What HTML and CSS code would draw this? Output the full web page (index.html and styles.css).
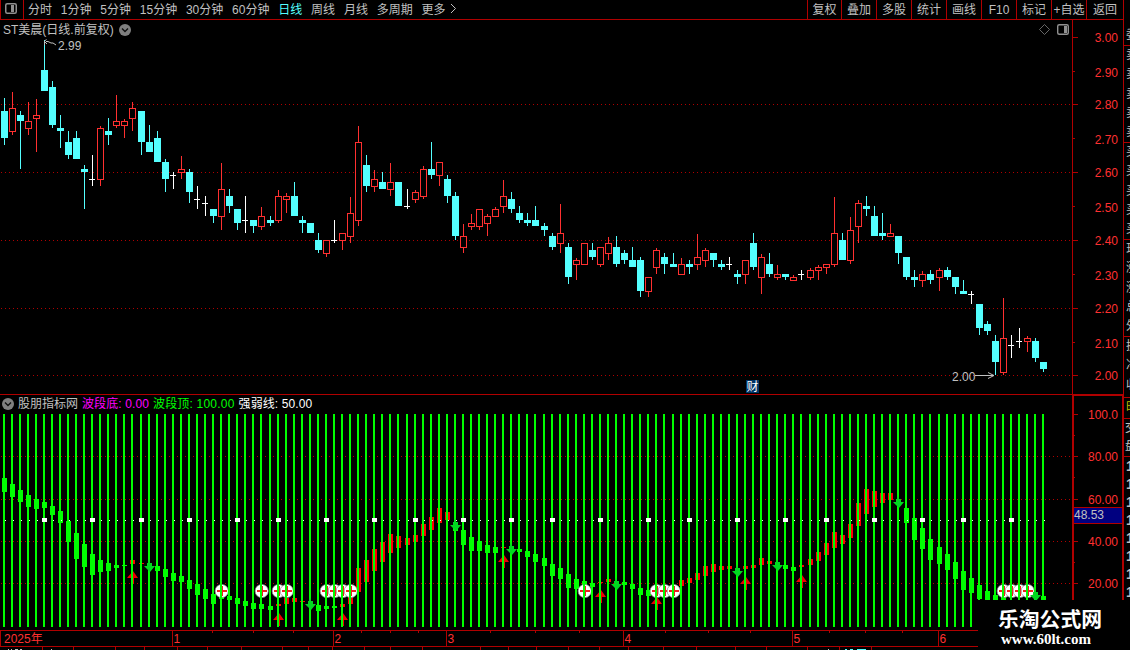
FILE: index.html
```html
<!DOCTYPE html>
<html lang="zh-CN">
<head>
    <meta charset="UTF-8">
    <meta name="viewport" content="width=device-width, initial-scale=1.0">
    <title>ST美晨 日线</title>
    <link rel="stylesheet" href="styles.css">
</head>
<body>
    <div class="toolbar">
        <div class="panel-btn">
            <svg width="12" height="11"><rect x="0.75" y="0.75" width="10.5" height="9.5" rx="1.5" fill="none" stroke="#909090" stroke-width="1.5"/><rect x="6" y="2" width="3" height="7" fill="#909090"/></svg>
        </div>
        <div class="periods">
            <span>分时</span><span>1分钟</span><span>5分钟</span><span>15分钟</span><span>30分钟</span><span>60分钟</span><span class="active">日线</span><span>周线</span><span>月线</span><span>多周期</span><span>更多</span>
            <svg class="more" width="7" height="11"><path d="M1 1l4.5 4.5L1 10" fill="none" stroke="#c0c0c0"/></svg>
        </div>
        <div class="actions">
            <span class="first">复权</span><span>叠加</span><span>多股</span><span>统计</span><span>画线</span><span>F10</span><span>标记</span><span>+自选</span><span class="last">返回</span>
        </div>
    </div>
    <div class="main">
        <div class="charts">
            <div class="kline">
                <svg id="kline" width="1123" height="375" viewBox="0 20 1123 375"></svg>
                <div class="title">
                    <span>ST美晨(日线.前复权)</span>
                    <svg width="12" height="12"><circle cx="6" cy="6" r="6" fill="#808080"/><path d="M3 4.5l3 3 3-3" fill="none" stroke="#101010" stroke-width="1.4"/></svg>
                </div>
            </div>
            <div class="indicator">
                <svg id="indicator" width="1123" height="235" viewBox="0 395 1123 235"></svg>
                <div class="title legend">
                    <svg width="12" height="12"><circle cx="6" cy="6" r="6" fill="#808080"/><path d="M3 4.5l3 3 3-3" fill="none" stroke="#101010" stroke-width="1.4"/></svg>
                    <span class="name">股朋指标网</span>
                    <span class="low">波段底: 0.00</span>
                    <span class="high">波段顶: 100.00</span>
                    <span class="mid">强弱线: 50.00</span>
                </div>
            </div>
            <svg id="timeline" width="1123" height="20" viewBox="0 630 1123 20"></svg>
        </div>
        <div class="side">
            <div class="group head"><p>委</p></div>
            <div class="group"><p>卖</p><p>卖</p><p>卖</p><p>卖</p><p>卖</p></div>
            <div class="group"><p>买</p><p>买</p><p>买</p><p>买</p><p>买</p></div>
            <div class="group"><p>现</p><p>涨</p><p>涨</p><p>总</p><p>外</p></div>
            <div class="group rest"><p>换</p><p>净</p><p>收</p></div>
            <div class="group tab"><p>时</p></div>
            <div class="group deal"><p>交</p><p>盘</p></div>
            <div class="ticks"><p>1</p><p>1</p><p>1</p><p>1</p><p>1</p><p>1</p><p>1</p><p>1</p></div>
        </div>
    </div>
    <div class="watermark">
        <b>乐淘公式网</b>
        <i>www.60lt.com</i>
    </div>
    <script src="chart.js"></script>
</body>
</html>
```
FILE: styles.css
```css
* {
    box-sizing: border-box;
}
body {
    margin: 0;
    width: 1130px;
    height: 650px;
    overflow: hidden;
    background: #000;
    color: #c0c0c0;
    font: 12px/14px "Liberation Sans", "Noto Sans CJK SC", sans-serif;
    position: relative;
}
svg {
    display: block;
}
p {
    margin: 0;
}
.toolbar {
    display: flex;
    width: 1124px;
    height: 20px;
    border: 1px solid #b00000;
    border-top: none;
    line-height: 18px;
    white-space: nowrap;
}
.panel-btn {
    width: 23px;
    padding: 3px 0 0 4px;
    border-right: 1px solid #b00000;
}
.periods {
    display: flex;
    gap: 8.8px;
    padding: 1px 0 0 4px;
}
.periods .active {
    color: #54ffff;
}
.periods .more {
    margin: 2px 0 0 -4px;
}
.actions {
    display: flex;
    margin-left: auto;
}
.actions span {
    width: 35px;
    padding-top: 1px;
    text-align: center;
    border-left: 1px solid #b00000;
}
.actions .first {
    width: 34px;
}
.actions .last {
    width: 37px;
}
.main {
    display: flex;
    height: 630px;
}
.charts {
    width: 1123px;
    flex: none;
}
.kline, .indicator {
    position: relative;
}
.title {
    position: absolute;
    left: 3px;
    top: 2px;
    display: flex;
    align-items: center;
    gap: 5px;
    white-space: nowrap;
}
.title span {
    padding-top: 1px;
}
.legend {
    left: 2px;
    top: 1px;
    gap: 4px;
}
.low { color: #ff00ff; letter-spacing: 0.1px; }
.high { color: #00ff00; letter-spacing: 0.2px; }
.mid { color: #fff; letter-spacing: 0.1px; }
.side {
    width: 7px;
    overflow: hidden;
    border-left: 1px solid #b00000;
}
.group {
    height: 97px;
    padding-left: 2px;
    border-bottom: 1px solid #b00000;
    line-height: 19.3px;
    overflow: hidden;
    width: 20px;
}
.head {
    height: 26px;
    padding-top: 6px;
    border-bottom: 1px solid #b00000;
}
.rest {
    height: 61px;
}
.tab {
    height: 21px;
    color: #c0c000;
}
.deal {
    height: 38px;
    padding-left: 1px;
    line-height: 18px;
}
.ticks {
    padding-left: 2px;
    font-weight: bold;
    font-size: 14px;
    line-height: 18px;
}
.watermark {
    position: absolute;
    left: 978px;
    top: 600px;
    width: 152px;
    height: 50px;
    padding: 6px 0 0 20px;
    background: #000;
    color: #fff;
}
.watermark b {
    display: block;
    font: bold 20.8px/24px "Noto Sans CJK SC", sans-serif;
}
.watermark i {
    display: block;
    padding: 1px 0 0 3px;
    font: bold 15px/16px "Liberation Serif", serif;
}
svg text {
    font: 12px "Liberation Sans", "Noto Sans CJK SC", sans-serif;
}
```
FILE: chart.js
```js
// x, high, body top, body bottom, low, type (c = down, r = up, w = flat)
const candles = `4 98 111 138 145 c|12 92 108 132 135 r|20 111 115 121 169 c|28 102 121 129 135 r|36 99 115 119 152 r
44 40 70 91 91 c|52 81 87 125 128 c|60 115 128 131 148 c|68 131 142 155 159 c|76 131 138 159 159 c
84 165 169 172 209 c|92 155 179 180 186 w|100 126 128 180 186 r|108 118 131 135 145 c|116 95 121 126 128 r
124 119 121 126 138 r|132 102 108 119 131 r|141 111 111 142 155 c|149 125 142 152 152 c|157 131 138 162 162 c
165 159 162 179 192 c|173 172 175 176 189 w|181 156 169 173 179 r|189 169 172 192 203 c|197 186 199 200 209 w
205 196 203 204 216 w|213 209 209 216 223 c|221 163 189 217 230 r|229 189 196 206 213 c|237 209 209 223 230 c
245 196 220 221 233 w|253 220 220 226 233 c|261 207 216 227 230 r|270 216 220 223 226 c|278 190 196 221 223 r
286 193 196 200 213 r|294 182 196 216 216 c|302 216 220 223 233 c|310 223 223 233 233 c|318 233 240 250 253 c
326 240 240 254 257 r|334 220 240 241 243 w|342 233 233 241 250 r|350 197 213 237 243 r|358 126 142 221 226 r
366 155 165 186 192 c|374 170 179 187 192 r|382 172 182 189 189 c|390 163 182 190 196 r|398 182 182 206 206 c
407 189 206 207 209 w|415 190 192 200 203 r|423 166 169 197 199 r|431 142 169 175 179 c|439 162 162 176 186 r
447 175 179 196 203 c|455 192 196 236 240 c|463 224 236 248 253 r|471 214 223 227 230 r|479 209 209 227 230 r
487 214 216 224 236 r|495 207 209 217 217 r|503 180 196 207 213 r|511 192 199 209 213 c|519 206 213 220 223 c
527 213 220 223 226 c|535 206 220 226 226 c|544 223 226 230 236 c|552 233 236 247 250 c|560 204 233 244 253 r
568 243 247 277 284 c|576 258 260 265 280 r|584 243 243 265 265 r|592 243 250 257 260 c|600 247 247 265 267 r
608 237 243 254 260 r|616 236 247 264 267 c|624 250 253 260 264 c|632 247 260 267 267 c|640 257 260 291 297 c
648 277 277 292 297 r|656 248 250 268 274 r|664 253 257 264 274 c|673 253 264 267 267 c|681 258 264 275 275 r
689 260 264 267 274 c|697 234 257 265 270 r|705 248 250 261 267 r|713 253 253 260 267 c|721 260 264 267 270 c
729 257 264 265 270 w|737 270 274 277 284 c|745 260 260 275 284 r|753 233 243 267 270 c|761 254 257 278 294 r
769 253 264 274 277 c|777 265 274 278 280 r|785 274 274 277 280 c|793 275 277 281 281 r|801 270 274 275 280 w
810 268 270 278 280 r|818 265 267 271 280 r|826 264 264 268 274 r|834 197 233 265 267 r|842 233 240 260 260 c
850 217 230 261 264 r|858 200 203 227 243 r|866 196 206 209 216 c|874 206 216 236 236 c|882 213 233 236 240 c
890 224 233 237 237 r|898 236 236 253 264 c|906 257 257 277 280 c|914 270 277 280 287 c|922 271 274 281 287 r
930 270 274 280 284 c|939 268 270 278 291 r|947 267 270 277 280 c|955 277 277 287 294 c|963 280 291 294 294 c
971 291 294 295 304 w|979 304 304 328 335 c|987 321 324 331 335 c|995 335 341 362 375 c|1003 298 338 373 375 r
1011 335 345 346 358 w|1019 328 341 342 348 w|1027 336 338 342 352 r|1035 338 341 358 362 c|1043 362 362 369 372 c`
    .split(/[|\n]/).map(s => s.trim().split(' ').map((v, i) => i < 5 ? +v : v));

// x, top, bottom, colour
const waves = `4 478 492 g|12 484 497 g|20 490 502 g|28 495 507 g|36 499 509 g|44 502 508 g|52 506 515 g|60 511 523 g
68 521 542 g|76 533 559 g|84 544 567 g|92 554 575 g|100 560 572 g|108 563 571 g|116 565 568 g|124 565 566 g
132 560 564 r|141 563 564 r|157 566 571 g|165 569 577 g|173 573 581 g|181 576 582 g|189 580 589 g|197 584 595 g
205 589 599 g|213 594 604 g|221 594 599 g|229 596 600 g|237 598 604 g|245 601 606 g|253 603 609 g|261 604 609 g
270 606 610 g|278 604 606 r|286 598 604 r|294 598 602 r|302 601 602 r|318 605 611 g|326 606 609 g|334 606 608 g
342 604 607 r|350 590 604 r|358 568 592 r|366 560 582 r|374 549 571 r|382 542 562 r|390 534 553 r|398 536 548 r
407 538 545 r|415 535 542 r|423 524 536 r|431 517 530 r|439 508 523 r|447 512 520 r|455 528 531 g|463 530 545 g
471 537 551 g|479 541 551 g|487 545 553 g|495 547 553 g|503 547 548 r|511 547 548 r|519 549 552 g|527 551 557 g
535 554 562 g|544 558 566 g|552 564 576 g|560 568 579 g|568 574 588 g|576 579 589 g|584 581 593 g|592 583 587 g
600 582 583 r|608 579 582 r|624 582 585 g|632 584 589 g|640 588 595 g|648 590 596 g|681 580 586 r|689 578 583 r
697 573 580 r|705 566 576 r|713 564 572 r|721 566 570 r|729 566 569 r|745 566 569 r|753 565 568 r|761 558 565 r
769 561 564 r|785 565 569 g|793 567 571 g|801 565 567 r|810 559 565 r|818 552 561 r|826 543 555 r|834 532 548 r
842 535 544 r|850 524 538 r|858 503 526 r|866 489 514 r|874 491 507 r|882 493 503 r|890 493 500 r|906 508 523 g
914 518 540 g|922 528 549 g|930 539 560 g|939 547 564 g|947 554 570 g|955 562 579 g|963 571 590 g|971 578 593 g
979 585 599 g|987 591 600 g|995 595 600 g|1003 596 600 g|1043 596 600 g`
    .split(/[|\n]/).map(s => s.trim().split(' '));

const RED = '#b00000';
const rect = (x, y, w, h, fill) => `<rect x="${x}" y="${y}" width="${w}" height="${h}" fill="${fill}" shape-rendering="crispEdges"/>`;
const text = (x, y, s, fill, anchor) => `<text x="${x}" y="${y}" fill="${fill}" text-anchor="${anchor || 'start'}">${s}</text>`;
const dots = (x, y, end, step, fill) => `<path d="M${x} ${y + 0.5}H${end}" stroke="${fill}" stroke-dasharray="1 ${step - 1}" shape-rendering="crispEdges"/>`;

// price chart
let out = '';
[104, 172, 240, 308, 375].forEach(y => out += dots(1, y, 1072, 4, RED));
const colors = { c: '#54ffff', r: '#ff3030', w: '#ffffff' };
candles.forEach(([x, high, top, bottom, low, type]) => {
    const c = colors[type];
    out += rect(x, high, 1, low - high, c);
    if (type === 'w') {
        out += rect(x - 3, top, 6, 1, c);
    } else {
        out += rect(x - 3, top, 7, bottom - top, c);
        if (type === 'r') out += rect(x - 2, top + 1, 5, bottom - top - 2, '#000');
    }
});
out += rect(1072, 20, 1, 375, RED) + rect(0, 394, 1123, 1, RED);
[[37, 42], [71, 77], [104, 109], [138, 144], [172, 177], [206, 212], [240, 245], [274, 280], [308, 313], [342, 348], [375, 380]].forEach(([y, base], i) => {
    out += rect(1073, y, i % 2 ? 2 : 5, 1, RED);
    out += text(1118, base, (3 - i / 10).toFixed(2), '#ff3030', 'end');
});
out += '<path d="M46 41.5h2l3 1.5h2l3 2M44.5 45v-4l2-1.5M45 42l2 2" fill="none" stroke="#c0c0c0"/>' + text(58, 50, '2.99', '#c0c0c0');
out += text(952, 381, '2.00', '#c0c0c0') + '<path d="M975 375.5h19M988 372.5l6 3-6 3" fill="none" stroke="#c0c0c0"/>';
out += rect(746, 380, 13, 13, '#003366') + text(746.5, 391, '财', '#fff');
out += '<path d="M1044.5 24.5l5 5-5 5-5-5z" fill="none" stroke="#808080" stroke-width=".8"/>';
out += '<rect x="1057.7" y="24.7" width="10.6" height="9.6" rx="1.5" fill="none" stroke="#909090" stroke-width="1.4"/>' + rect(1064, 26, 3, 7, '#909090');
document.getElementById('kline').innerHTML = out;

// wave indicator
out = '';
[456, 499, 541, 583].forEach(y => out += dots(1, y, 1072, 4, RED));
waves.forEach(([x, top, bottom, c]) => out += rect(x - 2, top, 5, bottom - top, c === 'g' ? '#00ff00' : '#ff0000'));
[221, 261, 278, 286, 326, 334, 342, 350, 584, 656, 664, 673, 1003, 1011, 1019, 1027].forEach(x => {
    out += `<circle cx="${x + 0.7}" cy="591" r="6.6" fill="#fff" stroke="#888" stroke-width=".7"/>`;
    out += rect(x - 4, 590, 10, 2, '#f02020') + rect(x, 586, 2, 10, '#f02020');
});
[[132, 571], [278, 613], [342, 613], [503, 555], [600, 590], [656, 597], [745, 577], [801, 575]].forEach(([x, y]) => {
    out += `<path d="M${x + 1} ${y}l5 7h-4v6h-2v-6h-5z" fill="#f00000"/>`;
});
candles.forEach(([x]) => out += rect(x - 1, 414, 2, 213, '#00ff00') + rect(x + 1, 520, 1, 1, '#fff'));
[[149, 572], [310, 610], [455, 531], [511, 555], [616, 590], [737, 577], [777, 571], [898, 508], [1035, 601]].forEach(([x, y]) => {
    out += `<path d="M${x + 1} ${y}l5-6h-3v-3h-2l-1-4-1 4h-1v3h-3z" fill="#00d820"/>`;
});
[44, 92, 141, 189, 237, 278, 326, 374, 415, 463, 511, 552, 600, 648, 689, 737, 785, 826, 874, 922, 963, 1011].forEach(x => {
    out += rect(x - 2, 518, 5, 4, '#fff');
});
out += rect(1072, 395, 2, 235, RED) + rect(1122, 395, 1, 235, RED) + rect(1072, 395, 51, 1, RED);
[[414, '100.0'], [456, '80.00'], [499, '60.00'], [541, '40.00'], [583, '20.00']].forEach(([y, s]) => {
    out += rect(1074, y, 4, 1, RED) + rect(1074, y + 21, 1, 1, RED) + text(1118, y + 5, s, '#ff3030', 'end');
});
out += rect(1074, 507, 48, 17, RED) + rect(1074, 508, 48, 15, '#000080') + text(1074, 519, '48.53', '#c0c0c0');
document.getElementById('indicator').innerHTML = out;

// dates
out = rect(0, 630, 1123, 1, RED) + rect(0, 646, 1123, 1, RED) + rect(0, 630, 1, 17, RED) + text(4, 643, '2025年', '#ff3030');
[172, 333, 446, 623, 792, 938].forEach((x, i) => out += rect(x, 630, 1, 17, RED) + text(x + 1.5, 643, i + 1, '#ff3030'));
[212, 253, 293, 361, 390, 418, 490, 535, 579, 665, 708, 750, 829, 865, 902].forEach(x => out += rect(x, 631, 1, 2, RED));
[42, 73, 115, 144, 177, 207, 241, 282, 308, 332, 364, 390, 422, 480, 508, 536, 568, 599, 628, 663, 696, 735, 766, 807, 839, 871].forEach(x => {
    out += rect(x, 647, 1, 3, RED);
});
[[8, 1], [11, 1], [15, 3], [20, 2], [51, 1], [828, 1]].forEach(([x, w]) => out += rect(x, 649, w, 1, '#c0c0c0'));
[[845, 2], [850, 3], [857, 9]].forEach(([x, w]) => out += rect(x, 649, w, 1, '#54ffff'));
document.getElementById('timeline').innerHTML = out;
```
